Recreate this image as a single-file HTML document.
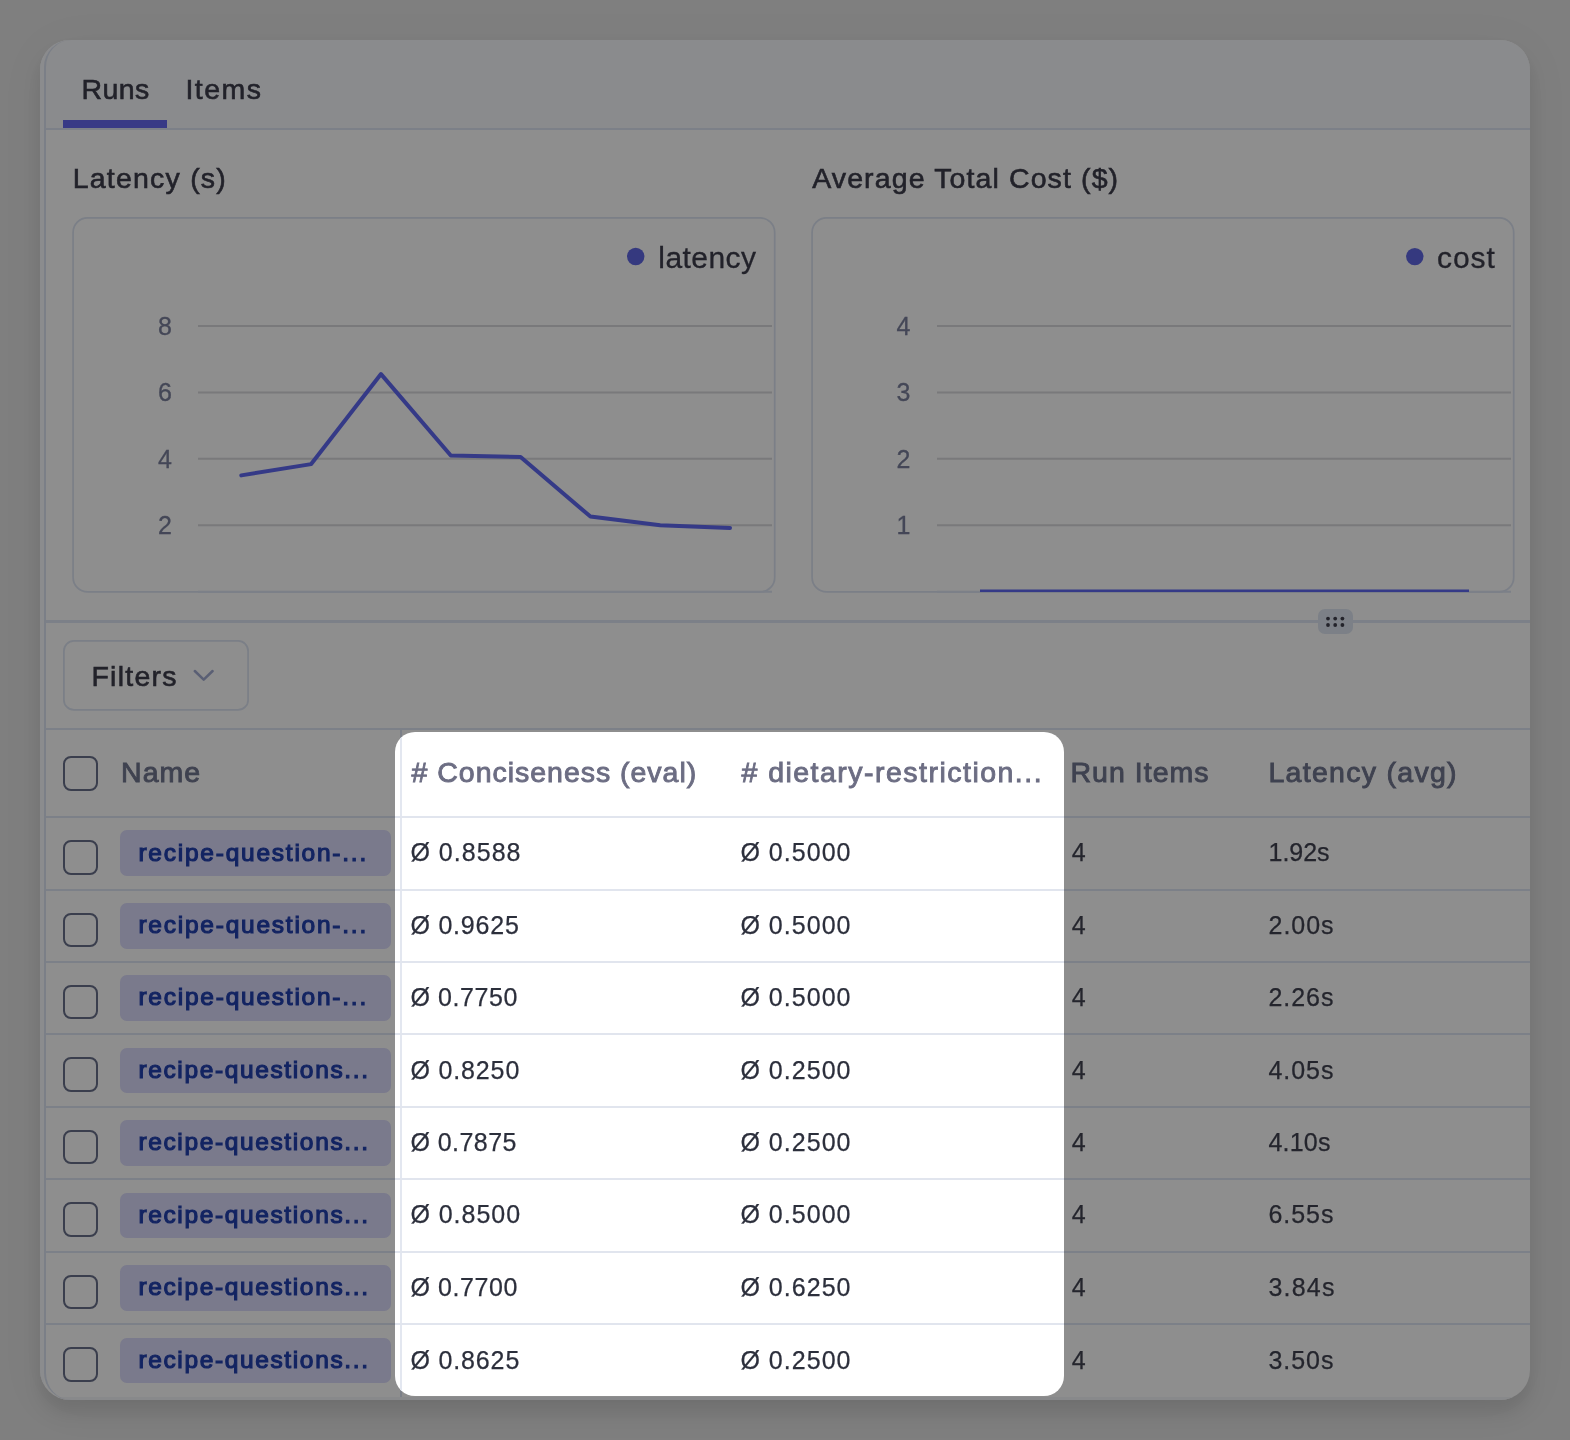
<!DOCTYPE html>
<html lang="en">
<head>
<meta charset="utf-8">
<title>Dataset runs</title>
<style>
html,body{margin:0;padding:0}
body{width:1570px;height:1440px;overflow:hidden;background:#7f7f7f;position:relative;font-family:"Liberation Sans",sans-serif}
.abs,.t,.ln,.cb,.pill{position:absolute}
.t{white-space:pre;line-height:1}
.card{left:40px;top:40px;width:1490px;height:1360px;border-radius:30px;background:#8e8e8e;overflow:hidden;box-shadow:0 13px 18px 0 rgba(0,0,0,.10),0 6px 50px 4px rgba(0,0,0,.03)}
.tabs{left:0;top:0;width:1490px;height:88px;background:#8a8b8d}
.ln{background:#7c8088}
.cb{width:34.5px;height:34.5px;box-sizing:border-box;border:2px solid #3a3e4d;border-radius:8px;left:63px}
.pill{left:120px;width:271px;height:45.8px;border-radius:7px;background:#7a7a8c}
.hl{left:395px;top:731.7px;width:669px;height:664.2px;border-radius:20px;background:#fff;overflow:hidden}
.hl .ln{background:#e1e5ee}
</style>
</head>
<body>
<div class="abs card">
  <div class="abs tabs"></div>
  <div class="ln" style="left:6px;top:88px;width:1484px;height:2px"></div>
  <div class="abs" style="left:0;top:0;width:4px;height:1360px;background:#8b8c8e"></div>
  <div class="abs" style="left:0;top:1357px;width:1490px;height:3px;background:#88898b"></div>
  <div class="abs" style="left:4px;top:0;width:80px;height:1360px;box-sizing:border-box;border-left:2px solid #7b7f87;border-radius:27px 0 0 27px"></div>
</div>
<div class="abs" style="left:63px;top:120px;width:104px;height:8px;background:#383a86"></div>

<svg class="abs" style="left:0;top:200px" width="1570" height="530" viewBox="0 200 1570 530"><g fill="none" stroke="#7b7f87" stroke-width="1.7"><rect x="73.1" y="217.9" width="701.6" height="374" rx="14.5"/><rect x="812.1" y="217.9" width="701.6" height="374" rx="14.5"/><rect x="63.9" y="640.9" width="184.2" height="69" rx="10"/></g></svg>
<svg class="abs" style="left:0;top:200px" width="1570" height="420" viewBox="0 200 1570 420">
  <g stroke="#79797b" stroke-width="2">
    <path d="M198 326H772M198 392.4H772M198 458.8H772M198 525.2H772"/>
    <path d="M937 326H1511M937 392.4H1511M937 458.8H1511M937 525.2H1511"/>
  </g>
  <path d="M198 591.8H772M937 591.8H1511" stroke="#7c8088" stroke-width="2"/>
  <polyline fill="none" stroke="#353a87" stroke-width="4" stroke-linejoin="round" stroke-linecap="round"
    points="241.3,475.4 311.2,464.1 381,374.1 450.8,455.5 520.6,457.1 590.4,516.6 660.2,525.2 730,527.9"/>
  <path d="M980 590.8H1469" stroke="#353a87" stroke-width="2.4" fill="none"/>
  <circle cx="635.7" cy="256.5" r="8.7" fill="#35397f"/>
  <circle cx="1414.8" cy="256.6" r="8.7" fill="#35397f"/>
</svg>

<div class="ln" style="left:46px;top:620px;width:1484px;height:3px"></div>
<div class="abs" style="left:1318px;top:609px;width:34.5px;height:25px;border-radius:7px;background:#7c8087"></div>
<svg class="abs" style="left:1318px;top:609px" width="35" height="25" viewBox="0 0 35 25">
  <g fill="#23232b"><circle cx="10" cy="9.6" r="1.9"/><circle cx="17.2" cy="9.6" r="1.9"/><circle cx="24.4" cy="9.6" r="1.9"/><circle cx="10" cy="16" r="1.9"/><circle cx="17.2" cy="16" r="1.9"/><circle cx="24.4" cy="16" r="1.9"/></g>
</svg>

<svg class="abs" style="left:190px;top:664px" width="28" height="24" viewBox="0 0 28 24"><path d="M4.8 7L13.7 15.6L22.6 7" fill="none" stroke="#5a5f74" stroke-width="2.5" stroke-linecap="round" stroke-linejoin="round"/></svg>

<div class="ln" style="left:46px;top:728px;width:1484px;height:2px"></div>
<div class="ln" style="left:399.5px;top:729px;width:2px;height:668px"></div>
<div class="ln" style="left:46px;top:816px;width:1484px;height:2px"></div>
<div class="ln" style="left:46px;top:889px;width:1484px;height:2px"></div>
<div class="ln" style="left:46px;top:961px;width:1484px;height:2px"></div>
<div class="ln" style="left:46px;top:1033px;width:1484px;height:2px"></div>
<div class="ln" style="left:46px;top:1106px;width:1484px;height:2px"></div>
<div class="ln" style="left:46px;top:1178px;width:1484px;height:2px"></div>
<div class="ln" style="left:46px;top:1251px;width:1484px;height:2px"></div>
<div class="ln" style="left:46px;top:1323px;width:1484px;height:2px"></div>
<div class="cb" style="top:756px"></div>
<div class="cb" style="top:840.1px"></div><div class="pill" style="top:830.4px"></div>
<div class="cb" style="top:912.5px"></div><div class="pill" style="top:902.9px"></div>
<div class="cb" style="top:984.9px"></div><div class="pill" style="top:975.3px"></div>
<div class="cb" style="top:1057.3px"></div><div class="pill" style="top:1047.7px"></div>
<div class="cb" style="top:1129.8px"></div><div class="pill" style="top:1120.1px"></div>
<div class="cb" style="top:1202.1px"></div><div class="pill" style="top:1192.5px"></div>
<div class="cb" style="top:1274.5px"></div><div class="pill" style="top:1264.9px"></div>
<div class="cb" style="top:1347.0px"></div><div class="pill" style="top:1337.7px"></div>
<div class="abs hl">
  <div class="ln" style="left:5px;top:0;width:2px;height:670px;background:#e3e7f0"></div>
  <div class="ln" style="left:0;top:84.3px;width:669px;height:2px"></div>
  <div class="ln" style="left:0;top:157.3px;width:669px;height:2px"></div>
  <div class="ln" style="left:0;top:229.3px;width:669px;height:2px"></div>
  <div class="ln" style="left:0;top:301.3px;width:669px;height:2px"></div>
  <div class="ln" style="left:0;top:374.3px;width:669px;height:2px"></div>
  <div class="ln" style="left:0;top:446.3px;width:669px;height:2px"></div>
  <div class="ln" style="left:0;top:519.3px;width:669px;height:2px"></div>
  <div class="ln" style="left:0;top:591.3px;width:669px;height:2px"></div>
</div>
<div class="abs" style="left:0;top:0;width:1570px;height:1440px;will-change:transform">
<span class="t" style="left:81.5px;top:74.9px;font-size:28.5px;color:#22222a;-webkit-text-stroke:0.6px #22222a;letter-spacing:0.421px;">Runs</span>
<span class="t" style="left:185.5px;top:74.9px;font-size:28.5px;color:#22222a;-webkit-text-stroke:0.6px #22222a;letter-spacing:1.431px;">Items</span>
<span class="t" style="left:72.7px;top:163.6px;font-size:28.5px;color:#22222a;-webkit-text-stroke:0.6px #22222a;letter-spacing:1.213px;">Latency (s)</span>
<span class="t" style="left:812.2px;top:163.6px;font-size:28.5px;color:#22222a;-webkit-text-stroke:0.6px #22222a;letter-spacing:1.114px;">Average Total Cost ($)</span>
<span class="t" style="left:658.3px;top:242.6px;font-size:30px;color:#22222a;-webkit-text-stroke:0.3px #22222a;letter-spacing:0.440px;">latency</span>
<span class="t" style="left:1437.0px;top:242.6px;font-size:30px;color:#22222a;-webkit-text-stroke:0.3px #22222a;letter-spacing:0.923px;">cost</span>
<span class="t" style="left:158.0px;top:313.8px;font-size:25px;color:#444757;-webkit-text-stroke:0.3px #444757;">8</span>
<span class="t" style="left:158.0px;top:380.2px;font-size:25px;color:#444757;-webkit-text-stroke:0.3px #444757;">6</span>
<span class="t" style="left:158.0px;top:446.6px;font-size:25px;color:#444757;-webkit-text-stroke:0.3px #444757;">4</span>
<span class="t" style="left:158.0px;top:513.0px;font-size:25px;color:#444757;-webkit-text-stroke:0.3px #444757;">2</span>
<span class="t" style="left:896.6px;top:313.8px;font-size:25px;color:#444757;-webkit-text-stroke:0.3px #444757;">4</span>
<span class="t" style="left:896.6px;top:380.2px;font-size:25px;color:#444757;-webkit-text-stroke:0.3px #444757;">3</span>
<span class="t" style="left:896.6px;top:446.6px;font-size:25px;color:#444757;-webkit-text-stroke:0.3px #444757;">2</span>
<span class="t" style="left:896.6px;top:513.0px;font-size:25px;color:#444757;-webkit-text-stroke:0.3px #444757;">1</span>
<span class="t" style="left:91.4px;top:661.9px;font-size:28.5px;color:#22222a;-webkit-text-stroke:0.6px #22222a;letter-spacing:1.269px;">Filters</span>
<span class="t" style="left:121.1px;top:758.3px;font-size:28.5px;color:#3f4250;-webkit-text-stroke:0.9px #3f4250;letter-spacing:0.993px;">Name</span>
<span class="t" style="left:411.6px;top:758.3px;font-size:28.5px;color:#6c6d83;-webkit-text-stroke:0.9px #6c6d83;letter-spacing:0.973px;"># Conciseness (eval)</span>
<span class="t" style="left:741.4px;top:758.3px;font-size:28.5px;color:#6c6d83;-webkit-text-stroke:0.9px #6c6d83;letter-spacing:1.483px;"># dietary-restriction...</span>
<span class="t" style="left:1070.4px;top:758.3px;font-size:28.5px;color:#3f4250;-webkit-text-stroke:0.9px #3f4250;letter-spacing:1.040px;">Run Items</span>
<span class="t" style="left:1268.4px;top:758.3px;font-size:28.5px;color:#3f4250;-webkit-text-stroke:0.9px #3f4250;letter-spacing:1.295px;">Latency (avg)</span>
<span class="t" style="left:138.4px;top:840.5px;font-size:24.5px;color:#132462;-webkit-text-stroke:1.15px #132462;letter-spacing:1.764px;">recipe-question-...</span>
<span class="t" style="left:410.4px;top:840.4px;font-size:25px;color:#2c2f3c;-webkit-text-stroke:0.25px #2c2f3c;letter-spacing:1.034px;">Ø 0.8588</span>
<span class="t" style="left:740.4px;top:840.4px;font-size:25px;color:#2c2f3c;-webkit-text-stroke:0.25px #2c2f3c;letter-spacing:1.034px;">Ø 0.5000</span>
<span class="t" style="left:1071.7px;top:840.4px;font-size:25px;color:#24252d;-webkit-text-stroke:0.25px #24252d;">4</span>
<span class="t" style="left:1268.5px;top:840.4px;font-size:25px;color:#24252d;-webkit-text-stroke:0.25px #24252d;letter-spacing:-0.018px;">1.92s</span>
<span class="t" style="left:138.4px;top:913.0px;font-size:24.5px;color:#132462;-webkit-text-stroke:1.15px #132462;letter-spacing:1.764px;">recipe-question-...</span>
<span class="t" style="left:410.4px;top:912.8px;font-size:25px;color:#2c2f3c;-webkit-text-stroke:0.25px #2c2f3c;letter-spacing:0.806px;">Ø 0.9625</span>
<span class="t" style="left:740.4px;top:912.8px;font-size:25px;color:#2c2f3c;-webkit-text-stroke:0.25px #2c2f3c;letter-spacing:1.034px;">Ø 0.5000</span>
<span class="t" style="left:1071.7px;top:912.8px;font-size:25px;color:#24252d;-webkit-text-stroke:0.25px #24252d;">4</span>
<span class="t" style="left:1268.5px;top:912.8px;font-size:25px;color:#24252d;-webkit-text-stroke:0.25px #24252d;letter-spacing:0.982px;">2.00s</span>
<span class="t" style="left:138.4px;top:985.4px;font-size:24.5px;color:#132462;-webkit-text-stroke:1.15px #132462;letter-spacing:1.764px;">recipe-question-...</span>
<span class="t" style="left:410.4px;top:985.2px;font-size:25px;color:#2c2f3c;-webkit-text-stroke:0.25px #2c2f3c;letter-spacing:0.577px;">Ø 0.7750</span>
<span class="t" style="left:740.4px;top:985.2px;font-size:25px;color:#2c2f3c;-webkit-text-stroke:0.25px #2c2f3c;letter-spacing:1.034px;">Ø 0.5000</span>
<span class="t" style="left:1071.7px;top:985.2px;font-size:25px;color:#24252d;-webkit-text-stroke:0.25px #24252d;">4</span>
<span class="t" style="left:1268.5px;top:985.2px;font-size:25px;color:#24252d;-webkit-text-stroke:0.25px #24252d;letter-spacing:0.957px;">2.26s</span>
<span class="t" style="left:138.4px;top:1057.8px;font-size:24.5px;color:#132462;-webkit-text-stroke:1.15px #132462;letter-spacing:1.632px;">recipe-questions...</span>
<span class="t" style="left:410.4px;top:1057.6px;font-size:25px;color:#2c2f3c;-webkit-text-stroke:0.25px #2c2f3c;letter-spacing:0.863px;">Ø 0.8250</span>
<span class="t" style="left:740.4px;top:1057.6px;font-size:25px;color:#2c2f3c;-webkit-text-stroke:0.25px #2c2f3c;letter-spacing:1.034px;">Ø 0.2500</span>
<span class="t" style="left:1071.7px;top:1057.6px;font-size:25px;color:#24252d;-webkit-text-stroke:0.25px #24252d;">4</span>
<span class="t" style="left:1268.5px;top:1057.6px;font-size:25px;color:#24252d;-webkit-text-stroke:0.25px #24252d;letter-spacing:0.957px;">4.05s</span>
<span class="t" style="left:138.4px;top:1130.2px;font-size:24.5px;color:#132462;-webkit-text-stroke:1.15px #132462;letter-spacing:1.632px;">recipe-questions...</span>
<span class="t" style="left:410.4px;top:1130.0px;font-size:25px;color:#2c2f3c;-webkit-text-stroke:0.25px #2c2f3c;letter-spacing:0.463px;">Ø 0.7875</span>
<span class="t" style="left:740.4px;top:1130.0px;font-size:25px;color:#2c2f3c;-webkit-text-stroke:0.25px #2c2f3c;letter-spacing:1.034px;">Ø 0.2500</span>
<span class="t" style="left:1071.7px;top:1130.0px;font-size:25px;color:#24252d;-webkit-text-stroke:0.25px #24252d;">4</span>
<span class="t" style="left:1268.5px;top:1130.0px;font-size:25px;color:#24252d;-webkit-text-stroke:0.25px #24252d;letter-spacing:0.207px;">4.10s</span>
<span class="t" style="left:138.4px;top:1202.6px;font-size:24.5px;color:#132462;-webkit-text-stroke:1.15px #132462;letter-spacing:1.632px;">recipe-questions...</span>
<span class="t" style="left:410.4px;top:1202.4px;font-size:25px;color:#2c2f3c;-webkit-text-stroke:0.25px #2c2f3c;letter-spacing:0.977px;">Ø 0.8500</span>
<span class="t" style="left:740.4px;top:1202.4px;font-size:25px;color:#2c2f3c;-webkit-text-stroke:0.25px #2c2f3c;letter-spacing:1.034px;">Ø 0.5000</span>
<span class="t" style="left:1071.7px;top:1202.4px;font-size:25px;color:#24252d;-webkit-text-stroke:0.25px #24252d;">4</span>
<span class="t" style="left:1268.5px;top:1202.4px;font-size:25px;color:#24252d;-webkit-text-stroke:0.25px #24252d;letter-spacing:0.957px;">6.55s</span>
<span class="t" style="left:138.4px;top:1275.0px;font-size:24.5px;color:#132462;-webkit-text-stroke:1.15px #132462;letter-spacing:1.632px;">recipe-questions...</span>
<span class="t" style="left:410.4px;top:1274.8px;font-size:25px;color:#2c2f3c;-webkit-text-stroke:0.25px #2c2f3c;letter-spacing:0.577px;">Ø 0.7700</span>
<span class="t" style="left:740.4px;top:1274.8px;font-size:25px;color:#2c2f3c;-webkit-text-stroke:0.25px #2c2f3c;letter-spacing:1.034px;">Ø 0.6250</span>
<span class="t" style="left:1071.7px;top:1274.8px;font-size:25px;color:#24252d;-webkit-text-stroke:0.25px #24252d;">4</span>
<span class="t" style="left:1268.5px;top:1274.8px;font-size:25px;color:#24252d;-webkit-text-stroke:0.25px #24252d;letter-spacing:1.207px;">3.84s</span>
<span class="t" style="left:138.4px;top:1347.8px;font-size:24.5px;color:#132462;-webkit-text-stroke:1.15px #132462;letter-spacing:1.632px;">recipe-questions...</span>
<span class="t" style="left:410.4px;top:1347.7px;font-size:25px;color:#2c2f3c;-webkit-text-stroke:0.25px #2c2f3c;letter-spacing:0.863px;">Ø 0.8625</span>
<span class="t" style="left:740.4px;top:1347.7px;font-size:25px;color:#2c2f3c;-webkit-text-stroke:0.25px #2c2f3c;letter-spacing:1.034px;">Ø 0.2500</span>
<span class="t" style="left:1071.7px;top:1347.7px;font-size:25px;color:#24252d;-webkit-text-stroke:0.25px #24252d;">4</span>
<span class="t" style="left:1268.5px;top:1347.7px;font-size:25px;color:#24252d;-webkit-text-stroke:0.25px #24252d;letter-spacing:0.957px;">3.50s</span>
</div>
</body>
</html>
